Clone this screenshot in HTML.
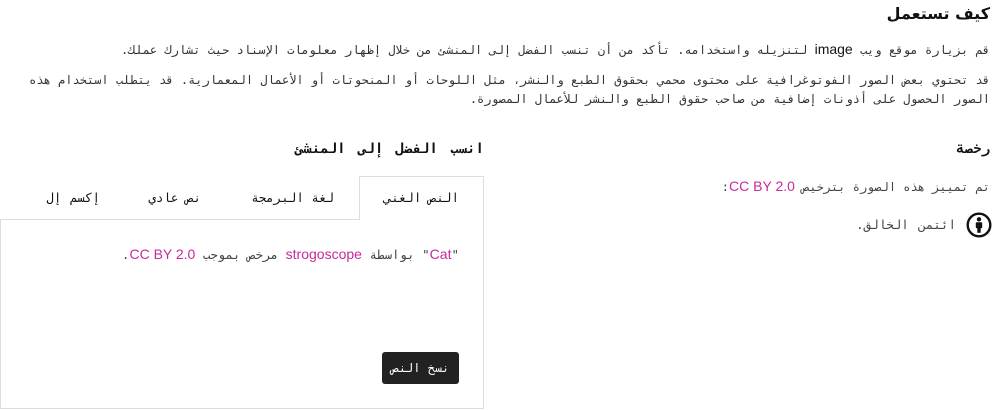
<!DOCTYPE html>
<html dir="rtl"><head><meta charset="utf-8"><style>
*{margin:0;padding:0;box-sizing:border-box}
body{width:992px;height:410px;overflow:hidden;background:#fff;color:#333;font-family:"DejaVu Sans Mono",monospace;position:relative}
.a{position:absolute;white-space:nowrap}
.l{font-family:"Liberation Sans",sans-serif;font-size:14px;word-spacing:0}
.p{color:#c52b9b}
</style></head><body>
<div class="a" style="right:2px;top:4px;font-size:16px;font-weight:bold;color:#111;font-family:'DejaVu Sans',sans-serif">كيف تستعمل</div>
<div class="a" style="right:2px;top:41px;font-size:12px">قم بزيارة موقع ويب <span class="l" style="color:#111">image</span> لتنزيله واستخدامه. تأكد من أن تنسب الفضل إلى المنشئ من خلال إظهار معلومات الإسناد حيث تشارك عملك.</div>
<div class="a" style="right:2px;top:71px;font-size:12px;line-height:19px;width:980px;white-space:normal;text-align:right">قد تحتوي بعض الصور الفوتوغرافية على محتوى محمي بحقوق الطبع والنشر، مثل اللوحات أو المنحوتات أو الأعمال المعمارية. قد يتطلب استخدام هذه الصور الحصول على أذونات إضافية من صاحب حقوق الطبع والنشر للأعمال المصورة.</div>
<div class="a" style="right:2px;top:141px;font-size:14px;font-weight:bold;color:#111;word-spacing:3px">رخصة</div>
<div class="a" style="right:2px;top:178px;font-size:12px;color:#444">تم تمييز هذه الصورة بترخيص <span class="l p">CC BY 2.0</span>:</div>
<svg class="a" style="right:0;top:212px" width="26" height="26" viewBox="0 0 26 26"><circle cx="13" cy="13" r="11.3" fill="none" stroke="#111" stroke-width="2.4"/><circle cx="13" cy="7.3" r="2.2" fill="#111"/><rect x="9.8" y="10.3" width="6.4" height="6" rx="1" fill="#111"/><rect x="11.3" y="15" width="3.4" height="5.8" fill="#111"/></svg>
<div class="a" style="right:36px;top:217px;font-size:12.5px;color:#444;word-spacing:2px">ائتمن الخالق.</div>
<div class="a" style="right:508px;top:141px;font-size:14px;font-weight:bold;color:#111;word-spacing:4px">انسب الفضل إلى المنشئ</div>
<div class="a" style="left:359px;top:176px;width:125px;height:44px;border:1px solid #ddd;border-bottom:none;background:#fff;z-index:2"></div>
<div class="a" style="right:533px;top:190px;font-size:12.5px;color:#111;z-index:3">النص الغني</div>
<div class="a" style="right:658px;top:190px;font-size:12.5px;color:#111">لغة البرمجة</div>
<div class="a" style="right:791px;top:190px;font-size:12.5px;color:#111">نص عادي</div>
<div class="a" style="right:892px;top:190px;font-size:12.5px;color:#111;word-spacing:1px">إكسم إل</div>
<div class="a" style="left:0;top:219px;width:484px;height:190px;border:1px solid #ddd"></div>
<div class="a" style="right:533px;top:246px;font-size:12.5px;color:#444">"<span class="l p">Cat</span>" بواسطة <span class="l p">strogoscope</span> مرخص بموجب <span class="l p">CC BY 2.0</span>.</div>
<div class="a" style="left:382px;top:352px;width:77px;height:32px;background:#222;border-radius:3px;color:#fff;font-size:12px;text-align:center;line-height:32px">نسخ النص</div>
</body></html>
